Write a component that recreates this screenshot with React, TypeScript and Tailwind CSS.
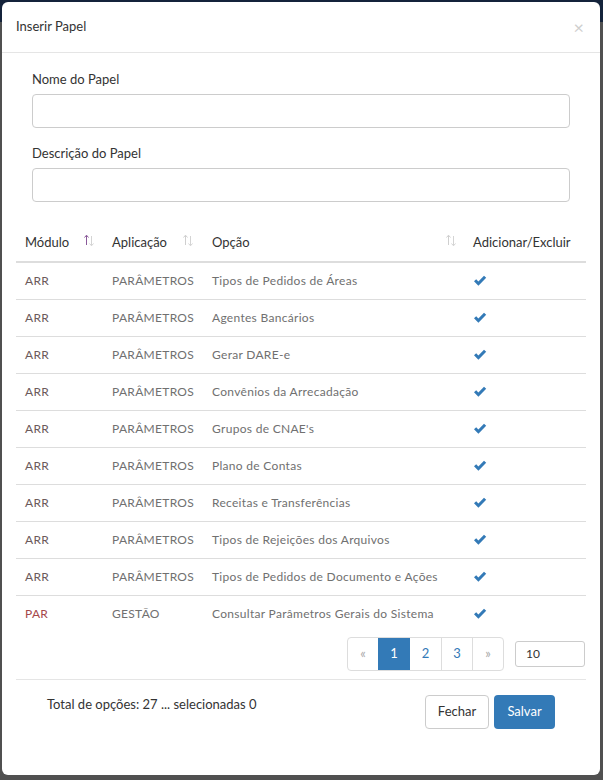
import React from "react";

const rows: [string, string, string][] = [
  ["ARR", "PARÂMETROS", "Tipos de Pedidos de Áreas"],
  ["ARR", "PARÂMETROS", "Agentes Bancários"],
  ["ARR", "PARÂMETROS", "Gerar DARE-e"],
  ["ARR", "PARÂMETROS", "Convênios da Arrecadação"],
  ["ARR", "PARÂMETROS", "Grupos de CNAE's"],
  ["ARR", "PARÂMETROS", "Plano de Contas"],
  ["ARR", "PARÂMETROS", "Receitas e Transferências"],
  ["ARR", "PARÂMETROS", "Tipos de Rejeições dos Arquivos"],
  ["ARR", "PARÂMETROS", "Tipos de Pedidos de Documento e Ações"],
  ["PAR", "GESTÃO", "Consultar Parâmetros Gerais do Sistema"],
];

function SortIcon({ active }: { active?: boolean }) {
  return (
    <svg width="12" height="13" viewBox="0 0 12 13" fill="none">
      <g stroke={active ? "#8a5a9a" : "#cfcfcf"} strokeWidth="1">
        <line x1="3.5" y1="1.5" x2="3.5" y2="11" />
        <polyline points="1.5,3.5 3.5,1.2 5.5,3.5" />
      </g>
      <g stroke="#d4d4d4" strokeWidth="1">
        <line x1="8.5" y1="2" x2="8.5" y2="11.5" />
        <polyline points="6.5,9.5 8.5,11.8 10.5,9.5" />
      </g>
    </svg>
  );
}

function Check() {
  return (
    <svg width="14" height="12" viewBox="0 0 14 12">
      <path d="M1 6.2 L3.2 4.2 L5.4 6.6 L11 0.8 L13.2 2.8 L5.4 10.8 Z" fill="#337ab7" />
    </svg>
  );
}

export default function App() {
  const font = { fontFamily: "Lato, 'Open Sans', sans-serif" };
  return (
    <div className="relative w-[603px] h-[780px] overflow-hidden bg-[#505050]" style={font}>
      <div className="h-[22px] bg-[#14233b]" />
      <div className="absolute left-[2px] top-[2px] w-[598px] h-[773px] bg-white rounded-[6px] flex flex-col">
        <div className="h-[51px] border-b border-[#e5e5e5] flex items-center justify-between pl-[14px] pr-[16px]">
          <span className="text-[13px] text-[#333]">Inserir Papel</span>
          <span className="text-[18px] text-[#cfcfcf] leading-none">×</span>
        </div>
        <div className="px-[14px] pt-[17px] flex flex-col">
          <div className="px-[16px] flex flex-col">
            <label className="text-[13px] text-[#333] leading-[18px]">Nome do Papel</label>
            <div className="mt-[6px] h-[34px] border border-[#ccc] rounded-[4px]" />
            <label className="mt-[16px] text-[13px] text-[#333] leading-[18px]">Descrição do Papel</label>
            <div className="mt-[6px] h-[34px] border border-[#ccc] rounded-[4px]" />
          </div>
          <table className="mt-[23px] w-[570px] border-collapse table-fixed">
            <colgroup>
              <col className="w-[96px]" />
              <col className="w-[100px]" />
              <col className="w-[261px]" />
              <col className="w-[113px]" />
            </colgroup>
            <thead>
              <tr className="h-[37px] border-b-2 border-[#ddd] text-[13px] text-[#333]">
                <th className="font-normal text-left pl-[9px]">
                  <div className="flex items-center justify-between pr-[17px]">
                    <span>Módulo</span>
                    <span className="-mt-[6px]"><SortIcon active /></span>
                  </div>
                </th>
                <th className="font-normal text-left">
                  <div className="flex items-center justify-between pr-[18px]">
                    <span>Aplicação</span>
                    <span className="-mt-[6px]"><SortIcon /></span>
                  </div>
                </th>
                <th className="font-normal text-left">
                  <div className="flex items-center justify-between pr-[16px]">
                    <span>Opção</span>
                    <span className="-mt-[6px]"><SortIcon /></span>
                  </div>
                </th>
                <th className="font-normal text-left">Adicionar/Excluir</th>
              </tr>
            </thead>
            <tbody>
              {rows.map((r, i) => (
                <tr
                  key={i}
                  className={`h-[37px] text-[12px] tracking-[0.3px] ${i > 0 ? "border-t border-[#ddd]" : ""}`}
                >
                  <td className={`pl-[9px] ${r[0] === "PAR" ? "text-[#a5484a]" : "text-[#6b5a5a]"}`}>{r[0]}</td>
                  <td className="text-[#707070]">{r[1]}</td>
                  <td className="text-[#707070] whitespace-nowrap">{r[2]}</td>
                  <td>
                    <div className="flex"><Check /></div>
                  </td>
                </tr>
              ))}
            </tbody>
          </table>
          <div className="mt-[5px] flex justify-end items-center gap-[11px] pr-[1px]">
            <div className="flex h-[34px] border border-[#ddd] rounded-[4px] text-[13px]">
              <div className="w-[30px] flex items-center justify-center text-[#aaa]">«</div>
              <div className="w-[32px] flex items-center justify-center bg-[#337ab7] text-white">1</div>
              <div className="w-[32px] flex items-center justify-center text-[#337ab7] border-r border-[#ddd]">2</div>
              <div className="w-[31px] flex items-center justify-center text-[#337ab7] border-r border-[#ddd]">3</div>
              <div className="w-[30px] flex items-center justify-center text-[#aaa]">»</div>
            </div>
            <div className="w-[70px] h-[26px] border border-[#ccc] rounded-[3px] flex items-center pl-[10px] text-[12px] text-[#333]">
              10
            </div>
          </div>
          <div className="mt-[8px] border-t border-[#e5e5e5]" />
          <div className="flex justify-between pl-[31px] pr-[31px] pt-[15px]">
            <span className="text-[13px] text-[#333] leading-[18px]">Total de opções: 27 ... selecionadas 0</span>
            <div className="flex gap-[5px]">
              <div className="w-[64px] h-[34px] border border-[#ccc] rounded-[4px] flex items-center justify-center text-[13px] text-[#333]">Fechar</div>
              <div className="w-[61px] h-[34px] bg-[#337ab7] rounded-[4px] flex items-center justify-center text-[13px] text-white">Salvar</div>
            </div>
          </div>
        </div>
      </div>
    </div>
  );
}
